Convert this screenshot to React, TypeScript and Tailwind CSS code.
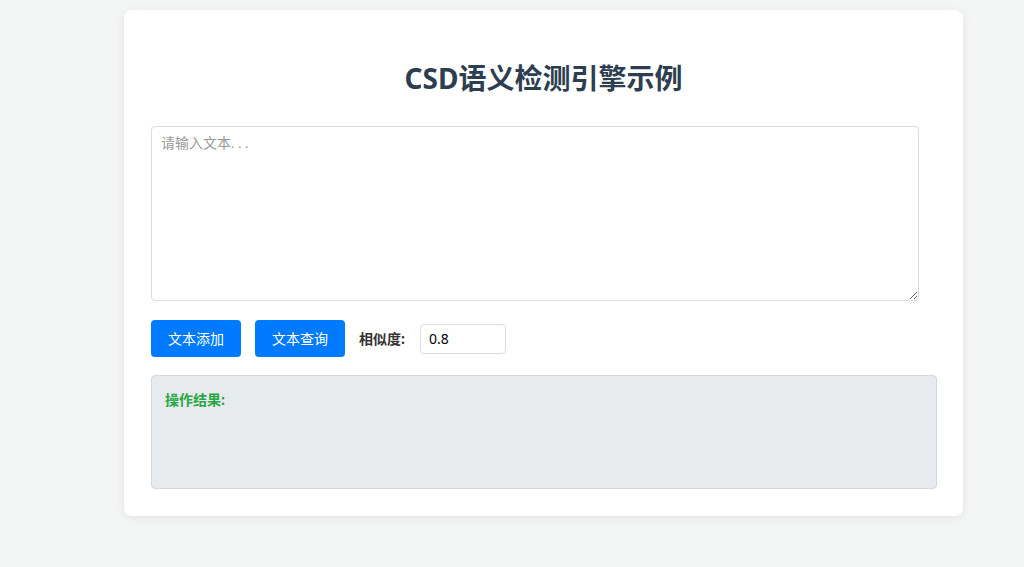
import React, { useState } from "react";

const App: React.FC = () => {
  const [text, setText] = useState("");
  const [threshold, setThreshold] = useState("0.8");

  return (
    <div className="min-h-[567px] bg-[#f4f6f6] pt-[10px] pb-[51px] font-['Noto_Sans','Noto_Sans_CJK_SC',sans-serif]">
      <div className="ml-[124px] w-[839px] bg-white rounded-lg shadow-[0_2px_10px_rgba(0,0,0,0.08)] px-[27px] pt-[27px] pb-[27px]">
        <h1 className="mt-[24px] h-[34px] leading-[34px] text-center text-[28px] font-bold text-[#2c3e50]">
          CSD语义检测引擎示例
        </h1>

        <textarea
          className="mt-[31px] block w-[768px] h-[175px] border border-[#dcdcdc] rounded-[4px] pt-[7px] px-[9px] text-[14px] leading-[20px] text-[#333] placeholder:text-[#9a9a9a] font-['Liberation_Serif','Noto_Sans_CJK_SC',serif] outline-none"
          placeholder="请输入文本. . ."
          value={text}
          onChange={(e) => setText(e.target.value)}
        />

        <div className="mt-[19px] flex items-center">
          <button className="w-[90px] h-[37px] bg-[#007bff] text-white text-[14px] rounded-[4px]">
            文本添加
          </button>
          <button className="ml-[14px] w-[90px] h-[37px] bg-[#007bff] text-white text-[14px] rounded-[4px]">
            文本查询
          </button>
          <label className="ml-[14px] text-[14px] font-bold text-[#333]">相似度:</label>
          <input
            className="ml-[15px] w-[86px] h-[30px] border border-[#dcdcdc] rounded-[4px] px-[8px] text-[14px] text-black outline-none"
            value={threshold}
            onChange={(e) => setThreshold(e.target.value)}
          />
        </div>

        <div className="mt-[18px] w-[786px] h-[114px] bg-[#e8ebee] border border-[#d4d8dc] rounded-[4px] pt-[14px] px-[13px]">
          <div className="text-[14px] leading-[20px] font-bold text-[#28a745]">操作结果:</div>
        </div>
      </div>
    </div>
  );
};

export default App;
